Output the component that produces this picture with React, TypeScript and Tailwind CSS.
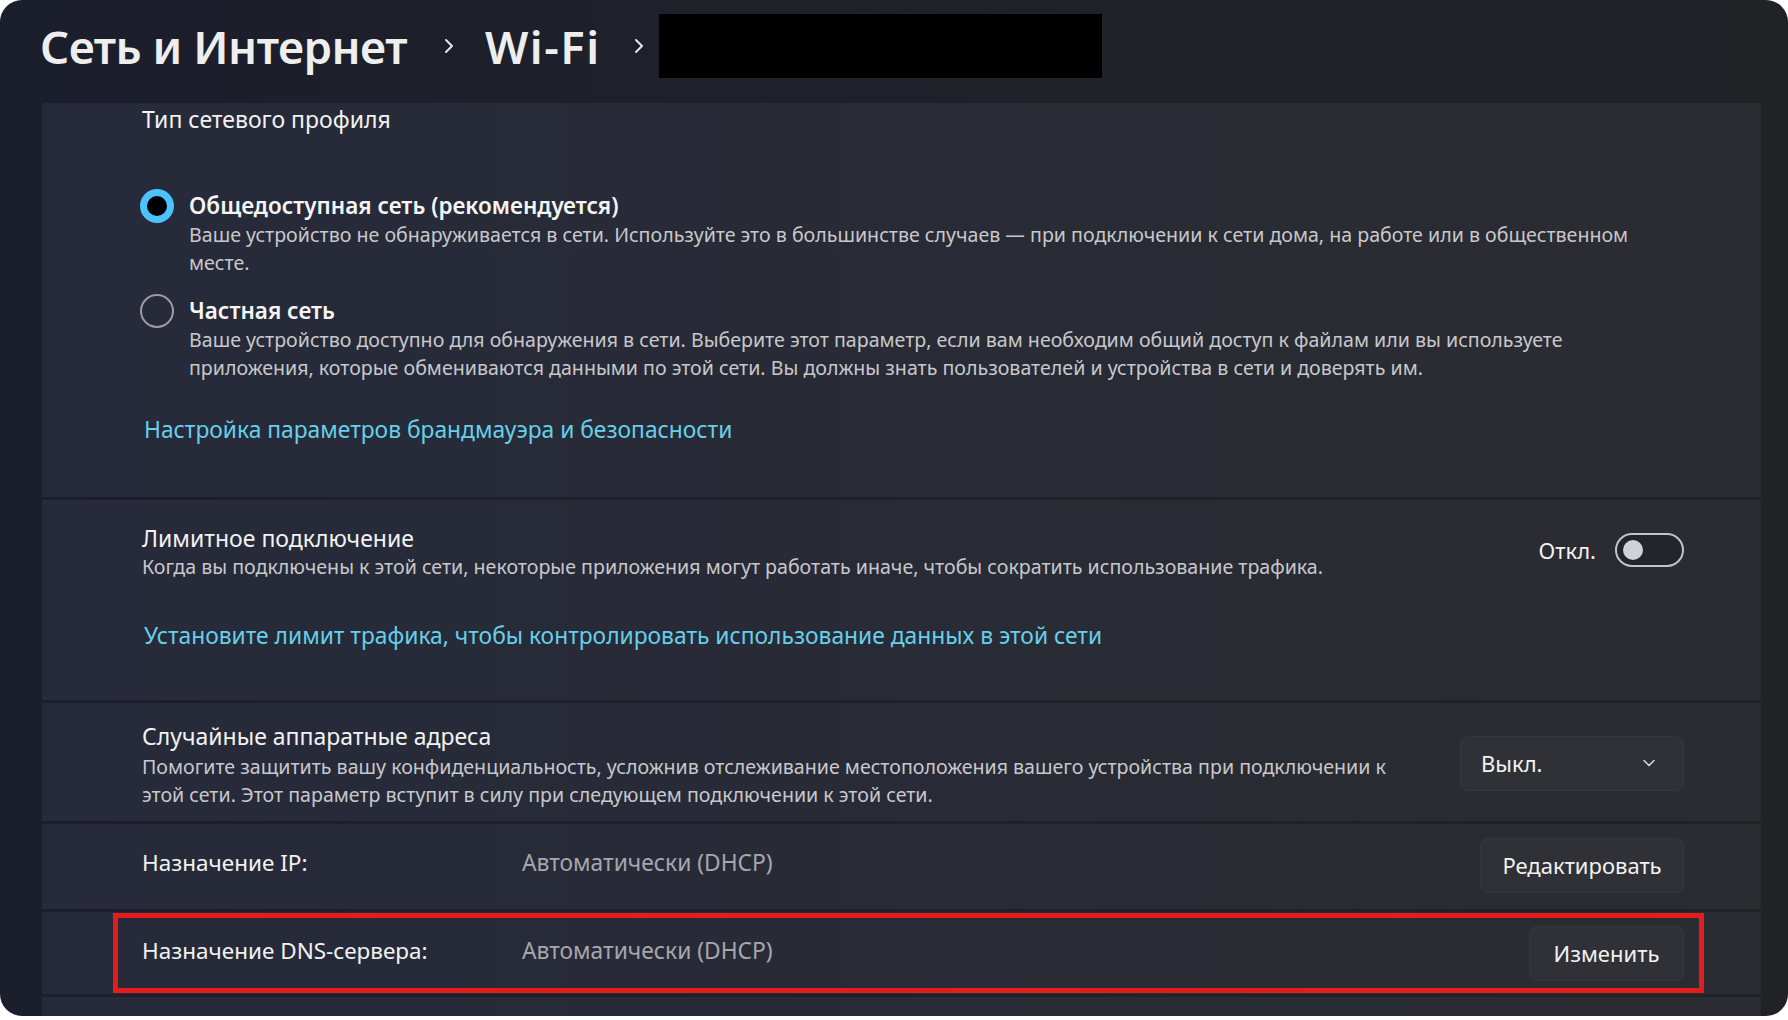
import React from "react";

const font = { fontFamily: '"Noto Sans", "Open Sans", sans-serif' };

function Chevron({ cls }: { cls: string }) {
  return (
    <svg width="16" height="22" viewBox="0 0 16 22" className={cls}>
      <path d="M5 5 L11 11 L5 17" fill="none" stroke="#e6e6e6" strokeWidth="2" strokeLinecap="round" strokeLinejoin="round" />
    </svg>
  );
}

export default function App() {
  return (
    <div className="w-[1788px] h-[1020px] bg-white" style={font}>
      <div className="w-[1788px] h-[1016px] rounded-[22px] overflow-hidden bg-gradient-to-r from-[#1b1e2b] via-[#1f212a] to-[#212226] flex flex-col">
        {/* Header */}
        <div className="h-[103px] flex items-start pl-[40px] pt-[14px]">
          <div className="h-[64px] flex items-center">
            <span className="text-[45.5px] font-semibold text-[#eeeeee] tracking-[-0.5px]">Сеть и Интернет</span>
            <Chevron cls="ml-[34px] mr-[28px]" />
            <span className="text-[45.5px] font-semibold text-[#eeeeee] tracking-[1.5px]">Wi-Fi</span>
            <Chevron cls="ml-[30px] mr-[12px]" />
            <div className="w-[443px] h-[64px] bg-black" />
          </div>
        </div>

        {/* Content */}
        <div className="flex-1 pl-[42px] pr-[27px] flex flex-col gap-[3px] overflow-hidden">
          {/* Section 1 */}
          <div className="bg-gradient-to-r from-[#262a3a] to-[#2b2c31] pl-[100px] pt-[2px] pb-[52px] rounded-t-[2px]">
            <div className="text-[23px] leading-[28px] text-[#f2f2f2]">Тип сетевого профиля</div>
            <div className="mt-[58px] flex">
              <div className="w-[49px] shrink-0 -ml-[2px]">
                <div className="mt-[-2px] w-[34px] h-[34px] rounded-full bg-[#4cc2ff] flex items-center justify-center">
                  <div className="w-[20px] h-[20px] rounded-full bg-black" />
                </div>
              </div>
              <div>
                <div className="text-[22.5px] leading-[30px] font-semibold text-[#f5f5f5]">Общедоступная сеть (рекомендуется)</div>
                <div className="text-[19.6px] leading-[27.5px] text-[#c8c8cc] whitespace-nowrap">
                  Ваше устройство не обнаруживается в сети. Используйте это в большинстве случаев — при подключении к сети дома, на работе или в общественном
                  <br />
                  месте.
                </div>
              </div>
            </div>
            <div className="mt-[20px] flex">
              <div className="w-[49px] shrink-0 -ml-[2px]">
                <div className="mt-[-2px] w-[34px] h-[34px] rounded-full border-2 border-[#9c9ca0]" />
              </div>
              <div>
                <div className="text-[22.5px] leading-[30px] font-semibold text-[#f5f5f5]">Частная сеть</div>
                <div className="text-[19.6px] leading-[27.5px] text-[#c8c8cc] whitespace-nowrap">
                  Ваше устройство доступно для обнаружения в сети. Выберите этот параметр, если вам необходим общий доступ к файлам или вы используете
                  <br />
                  приложения, которые обмениваются данными по этой сети. Вы должны знать пользователей и устройства в сети и доверять им.
                </div>
              </div>
            </div>
            <div className="mt-[34px] text-[22.8px] leading-[30px] text-[#66d0ea] ml-[2px]">Настройка параметров брандмауэра и безопасности</div>
          </div>

          {/* Section 2 */}
          <div className="bg-gradient-to-r from-[#262a3a] to-[#2b2c31] pl-[100px] pr-[77px] pt-[23px] pb-[49px]">
            <div className="flex items-center">
              <div className="flex-1">
                <div className="text-[23px] leading-[30px] text-[#f2f2f2]">Лимитное подключение</div>
                <div className="text-[19.6px] leading-[28px] text-[#c8c8cc]">
                  Когда вы подключены к этой сети, некоторые приложения могут работать иначе, чтобы сократить использование трафика.
                </div>
              </div>
              <div className="flex items-center gap-[19px] -mt-[4px]">
                <span className="text-[22px] text-[#f2f2f2]">Откл.</span>
                <div className="w-[69px] h-[34px] rounded-full border-2 border-[#c4c4c8] bg-[#23252c] flex items-center pl-[6px]">
                  <div className="w-[20px] h-[20px] rounded-full bg-[#d2d2d6]" />
                </div>
              </div>
            </div>
            <div className="mt-[40px] text-[22.8px] leading-[30px] text-[#66d0ea] ml-[2px]">
              Установите лимит трафика, чтобы контролировать использование данных в этой сети
            </div>
          </div>

          {/* Section 3 */}
          <div className="bg-gradient-to-r from-[#262a3a] to-[#2b2c31] pl-[100px] pr-[77px] pt-[20px] pb-[12px] flex items-center">
            <div className="flex-1">
              <div className="text-[23px] leading-[30px] text-[#f2f2f2] -mt-[2px] mb-[2px]">Случайные аппаратные адреса</div>
              <div className="text-[19.6px] leading-[28px] text-[#c8c8cc] whitespace-nowrap">
                Помогите защитить вашу конфиденциальность, усложнив отслеживание местоположения вашего устройства при подключении к
                <br />
                этой сети. Этот параметр вступит в силу при следующем подключении к этой сети.
              </div>
            </div>
            <div className="w-[224px] h-[55px] rounded-[8px] bg-[#303137] border border-[#36373d] flex items-center justify-between pl-[20px] pr-[26px] -mt-[6px]">
              <span className="text-[22px] text-[#f2f2f2]">Выкл.</span>
              <svg width="16" height="16" viewBox="0 0 16 16">
                <path d="M3 5.5 L8 10.5 L13 5.5" fill="none" stroke="#d8d8d8" strokeWidth="1.5" strokeLinecap="round" strokeLinejoin="round" />
              </svg>
            </div>
          </div>

          {/* IP row */}
          <div className="bg-gradient-to-r from-[#262a3a] to-[#2b2c31] pl-[100px] pr-[77px] h-[90px] flex items-center">
            <div className="w-[380px] text-[22.5px] text-[#f2f2f2] -mt-[8px]">Назначение IP:</div>
            <div className="flex-1 text-[22.8px] text-[#a6a7ad] -mt-[8px]">Автоматически (DHCP)</div>
            <div className="h-[55px] w-[204px] -mt-[2px] rounded-[8px] bg-[#303137] border border-[#36373d] flex items-center justify-center text-[22px] text-[#f2f2f2]">
              Редактировать
            </div>
          </div>

          {/* DNS row */}
          <div className="relative bg-gradient-to-r from-[#262a3a] to-[#2b2c31] pl-[100px] pr-[77px] h-[86px] flex items-center">
            <div className="w-[380px] text-[22.5px] text-[#f2f2f2] -mt-[4px]">Назначение DNS-сервера:</div>
            <div className="flex-1 text-[22.8px] text-[#a6a7ad] -mt-[4px]">Автоматически (DHCP)</div>
            <div className="h-[55px] w-[155px] rounded-[8px] bg-[#303137] border border-[#36373d] flex items-center justify-center text-[22px] text-[#f2f2f2]">
              Изменить
            </div>
            <div className="absolute left-[71px] top-[1px] w-[1591px] h-[80px] border-[5px] border-[#e41c1c] pointer-events-none" />
          </div>

          <div className="bg-gradient-to-r from-[#262a3a] to-[#2b2c31] h-[20px]" />
        </div>
      </div>
    </div>
  );
}
